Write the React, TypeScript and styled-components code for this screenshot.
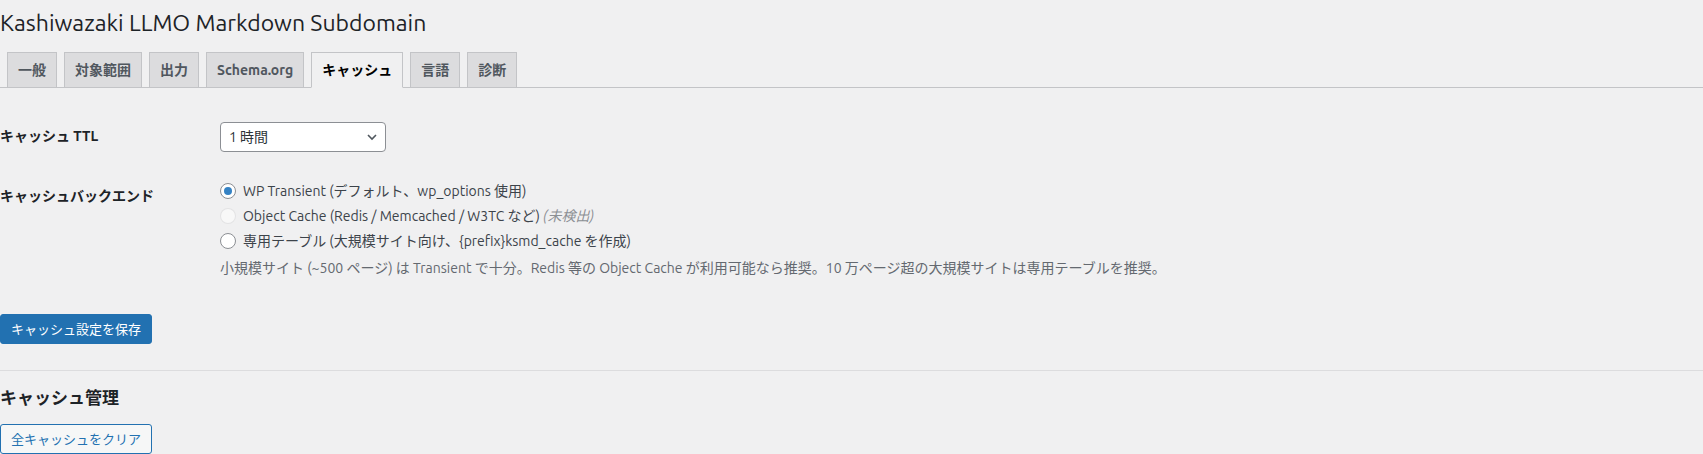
import React from "react";
import styled, { createGlobalStyle } from "styled-components";

const FONT = `Ubuntu, "Noto Sans", "Noto Sans CJK JP", sans-serif`;

const Global = createGlobalStyle`
  html, body { margin: 0; padding: 0; background: #f0f0f1; }
  body { font-family: ${FONT}; color: #3c434a; font-size: 13px; }
  * { box-sizing: border-box; }
`;

const Wrap = styled.div`
  padding: 8px 0 0 0;
`;

const Title = styled.h1`
  margin: 0;
  font-size: 23px;
  font-weight: 400;
  line-height: 1.3;
  color: #1d2327;
`;

const TabBar = styled.nav`
  display: flex;
  margin-top: 14px;
  border-bottom: 1px solid #c3c4c7;
`;

const Tab = styled.a<{ $active?: boolean }>`
  margin-left: 7px;
  margin-bottom: -1px;
  padding: 5px 10px;
  font-size: 14px;
  line-height: 24px;
  font-weight: 600;
  text-decoration: none;
  white-space: nowrap;
  border: 1px solid #c3c4c7;
  border-bottom-color: ${(p) => (p.$active ? "#f0f0f1" : "#c3c4c7")};
  background: ${(p) => (p.$active ? "#f0f0f1" : "#dcdcde")};
  color: ${(p) => (p.$active ? "#000" : "#50575e")};
`;

const FormTable = styled.div`
  display: grid;
  grid-template-columns: 210px 1fr;
  margin-top: 19px;
`;

const Th = styled.div`
  padding: 20px 10px 20px 0;
  font-size: 14px;
  font-weight: 600;
  line-height: 1.3;
  color: #1d2327;
`;

const Td = styled.div<{ $top?: number }>`
  padding: ${(p) => p.$top ?? 15}px 10px 15px 10px;
  font-size: 14px;
  line-height: 1.3;
`;

const Select = styled.div`
  width: 166px;
  height: 30px;
  border: 1px solid #8c8f94;
  border-radius: 4px;
  background: #fff;
  display: flex;
  align-items: center;
  justify-content: space-between;
  padding: 0 5px 0 8px;
  font-size: 14px;
  color: #2c3338;
`;

const Options = styled.div`
  display: flex;
  flex-direction: column;
`;

const Option = styled.label`
  display: flex;
  align-items: center;
  gap: 7px;
  height: 25px;
  font-size: 14px;
  color: #3c434a;
`;

const Radio = styled.span<{ $checked?: boolean; $disabled?: boolean }>`
  width: 16px;
  height: 16px;
  border-radius: 50%;
  flex: none;
  display: flex;
  align-items: center;
  justify-content: center;
  border: 1px solid ${(p) => (p.$disabled ? "rgba(220,220,222,0.75)" : "#8c8f94")};
  background: ${(p) => (p.$disabled ? "rgba(255,255,255,0.5)" : "#fff")};
  &::after {
    content: "";
    display: ${(p) => (p.$checked ? "block" : "none")};
    width: 8px;
    height: 8px;
    border-radius: 50%;
    background: #3582c4;
  }
`;

const Muted = styled.em`
  color: #8c8f94;
`;

const Description = styled.p`
  margin: 4px 0 0;
  font-size: 14px;
  line-height: 1.5;
  color: #646970;
`;

const Submit = styled.div`
  padding-top: 20px;
`;

const Button = styled.button<{ $primary?: boolean }>`
  height: 30px;
  padding: 0 10px;
  border-radius: 3px;
  font-family: ${FONT};
  font-size: 13px;
  line-height: 28px;
  cursor: pointer;
  border: 1px solid #2271b1;
  background: ${(p) => (p.$primary ? "#2271b1" : "#f6f7f7")};
  color: ${(p) => (p.$primary ? "#fff" : "#2271b1")};
`;

const Rule = styled.hr`
  margin: 26px 0 0;
  border: 0;
  border-top: 1px solid #dcdcde;
`;

const SectionTitle = styled.h2`
  margin: 16px 0 15px;
  font-size: 17px;
  font-weight: 600;
  line-height: 1.3;
  color: #1d2327;
`;

const Chevron = () => (
  <svg width="16" height="16" viewBox="0 0 20 20" fill="none">
    <path d="M5 7.5l5 5 5-5" stroke="#50575e" strokeWidth="2" />
  </svg>
);

const tabs = ["一般", "対象範囲", "出力", "Schema.org", "キャッシュ", "言語", "診断"];

export default function App() {
  return (
    <Wrap>
      <Global />
      <Title>Kashiwazaki LLMO Markdown Subdomain</Title>
      <TabBar>
        {tabs.map((t) => (
          <Tab key={t} $active={t === "キャッシュ"}>
            {t}
          </Tab>
        ))}
      </TabBar>
      <FormTable>
        <Th>キャッシュ TTL</Th>
        <Td>
          <Select>
            <span>1 時間</span>
            <Chevron />
          </Select>
        </Td>
        <Th>キャッシュバックエンド</Th>
        <Td $top={12}>
          <Options>
            <Option>
              <Radio $checked />
              WP Transient (デフォルト、wp_options 使用)
            </Option>
            <Option>
              <Radio $disabled />
              <span>
                Object Cache (Redis / Memcached / W3TC など) <Muted>(未検出)</Muted>
              </span>
            </Option>
            <Option>
              <Radio />
              専用テーブル (大規模サイト向け、{"{prefix}"}ksmd_cache を作成)
            </Option>
          </Options>
          <Description>
            小規模サイト (~500 ページ) は Transient で十分。Redis 等の Object Cache が利用可能なら推奨。10 万ページ超の大規模サイトは専用テーブルを推奨。
          </Description>
        </Td>
      </FormTable>
      <Submit>
        <Button $primary>キャッシュ設定を保存</Button>
      </Submit>
      <Rule />
      <SectionTitle>キャッシュ管理</SectionTitle>
      <Button>全キャッシュをクリア</Button>
    </Wrap>
  );
}
